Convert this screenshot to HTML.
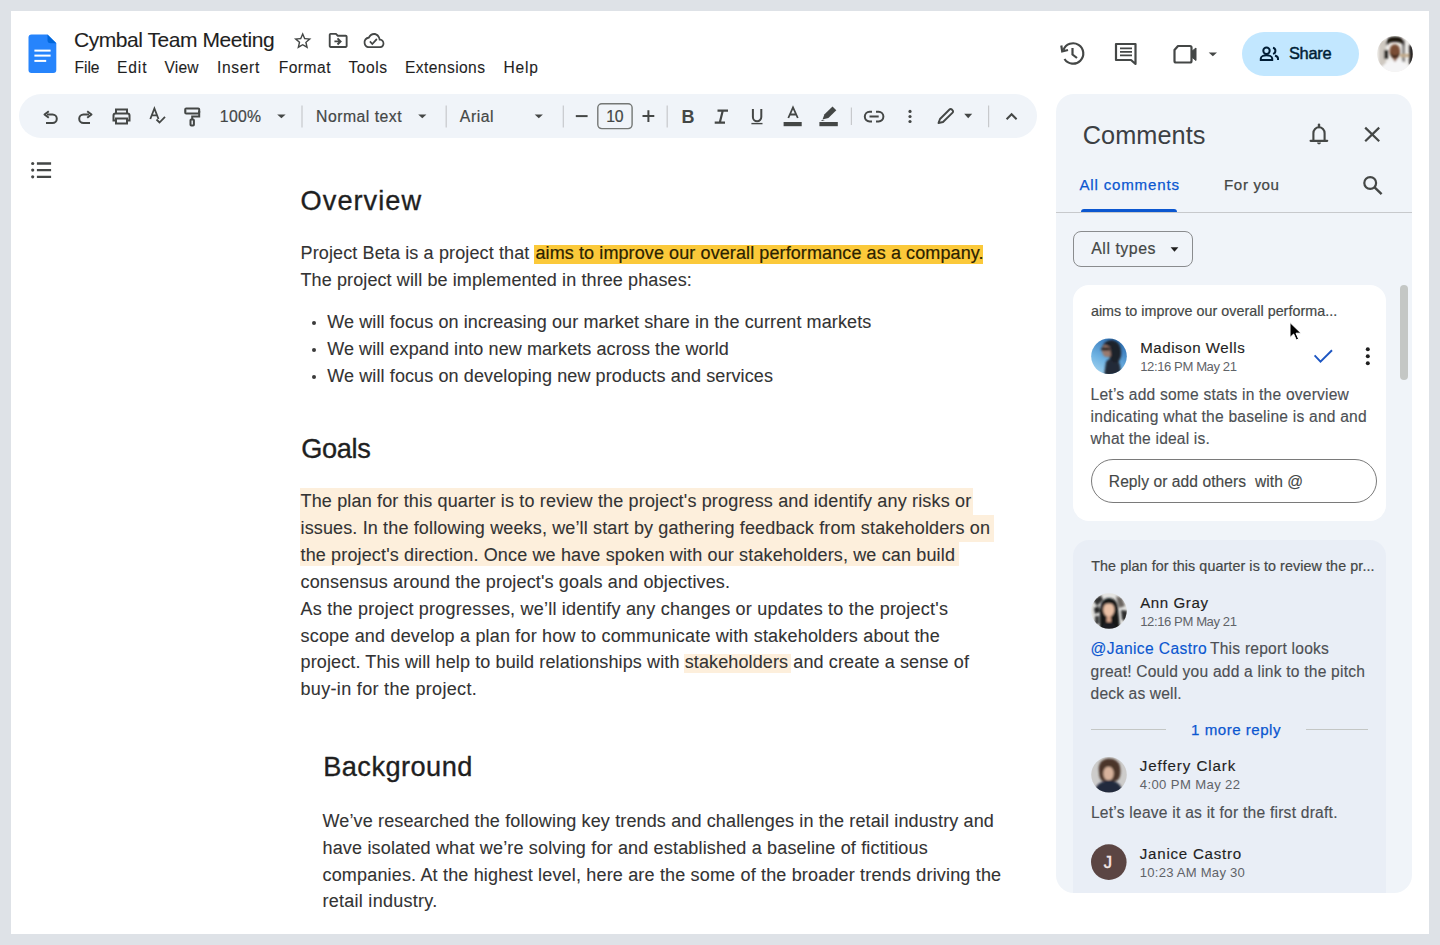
<!DOCTYPE html>
<html><head><meta charset="utf-8"><style>
html,body{margin:0;padding:0;}
body{width:1440px;height:945px;overflow:hidden;background:#dee2e7;position:relative;font-family:"Liberation Sans",sans-serif;}
.t{position:absolute;white-space:pre;line-height:1;}
.a{position:absolute;}
svg{position:absolute;overflow:visible;}
</style></head><body>
<div class=a style="left:11px;top:11px;width:1418px;height:923px;background:#fff"></div>
<!-- docs logo -->
<svg style="left:0;top:0" width="1" height="1">
  <path d="M31.5 34.4 H47.5 L56.3 43.2 V70.1 a3 3 0 0 1 -3 3 H31.5 a3 3 0 0 1 -3 -3 V37.4 a3 3 0 0 1 3 -3 Z" fill="#2684fc"/>
  <path d="M47.5 34.4 L56.3 43.2 H50.5 a3 3 0 0 1 -3 -3 Z" fill="#0066da"/>
  <rect x="34.4" y="49.6" width="16.2" height="2" fill="#fff"/>
  <rect x="34.4" y="54.6" width="16.2" height="2" fill="#fff"/>
  <rect x="34.4" y="59.9" width="11.8" height="2" fill="#fff"/>
</svg>
<!-- title icons -->
<svg style="left:0;top:0" width="1" height="1" fill="#444746">
  <path transform="translate(292.2 30.4) scale(0.875)" fill-rule="evenodd" d="M22 9.24l-7.19-.62L12 2 9.19 8.63 2 9.24l5.46 4.73L5.82 21 12 17.27 18.18 21l-1.63-7.03L22 9.24zM12 15.4l-3.76 2.27 1-4.28-3.32-2.88 4.38-.38L12 6.1l1.71 4.04 4.38.38-3.32 2.88 1 4.28L12 15.4z"/>
  <path transform="translate(326.9 29.2) scale(0.94)" d="M20 6h-8l-2-2H4c-1.1 0-1.99.9-1.99 2L2 18c0 1.1.9 2 2 2h16c1.1 0 2-.9 2-2V8c0-1.1-.9-2-2-2zm0 12H4V6h5.17l2 2H20v10zm-7.84-6H8v2h4.16l-1.59 1.59L11.99 17 16 13.01 11.99 9l-1.41 1.41L12.16 12z"/>
  <path transform="translate(363.7 29.3) scale(0.86 0.94)" d="M19.35 10.04C18.67 6.59 15.640 4 12 4 9.11 4 6.6 5.64 5.35 8.04 2.34 8.36 0 10.91 0 14c0 3.31 2.69 6 6 6h13c2.76 0 5-2.24 5-5 0-2.64-2.05-4.78-4.650-4.96zM19 18H6c-2.21 0-4-1.79-4-4 0-2.05 1.53-3.76 3.56-3.97l1.07-.11.5-.95C8.08 7.14 9.94 6 12 6c2.62 0 4.88 1.86 5.39 4.43l.3 1.5 1.53.11c1.560.1 2.780 1.41 2.78 2.96 0 1.65-1.35 3-3 3zm-9-3.82l-2.09-2.09L6.5 13.5 10 17l6.01-6.01-1.41-1.41z"/>
</svg>
<!-- header right icons -->
<svg style="left:0;top:0" width="1" height="1" fill="none" stroke="#444746" stroke-width="2.2">
  <path d="M1063.5 50 A10.2 10.2 0 1 1 1064.5 59" />
  <path d="M1061.3 45.5 L1062.2 51.5 L1068 50" stroke-linejoin="miter"/>
  <path d="M1072.5 48 V54.5 L1077 58" />
  <path d="M1116 44 H1135.5 V64 L1131 60 H1116 Z" stroke-linejoin="round"/>
  <path d="M1120 48.3 H1132 M1120 51.8 H1132 M1120 55.3 H1132" stroke-width="1.8"/>
  <path d="M1178 46 H1190 a1.5 1.5 0 0 1 1.5 1.5 V61 a1.5 1.5 0 0 1 -1.5 1.5 H1176 a1.5 1.5 0 0 1 -1.5 -1.5 V50 Z" stroke-linejoin="round"/>
  <path d="M1191.5 51.5 L1196 48 V60.5 L1191.5 57 Z" fill="#444746" stroke-width="1"/>
  <path d="M1208.7 52.5 H1217 L1212.85 56.3 Z" fill="#444746" stroke="none"/>
</svg>
<!-- share button -->
<div class=a style="left:1241.8px;top:31.8px;width:117.4px;height:43.8px;border-radius:22px;background:#c2e7ff"></div>
<svg style="left:0;top:0" width="1" height="1" fill="none" stroke="#001d35" stroke-width="2">
  <circle cx="1266.5" cy="50.8" r="3.2"/>
  <path d="M1260.8 60 V58.5 c0 -2 3 -3.2 5.7 -3.2 s5.7 1.2 5.7 3.2 V60 Z" />
  <path d="M1273 47.7 a3.2 3.2 0 0 1 0 6.2" />
  <path d="M1275 55.5 c1.8 0.6 3 1.6 3 3 V60" />
</svg>
<!-- user avatar -->
<svg style="left:0;top:0" width="1" height="1">
  <defs><clipPath id="cpU"><circle cx="1395" cy="53.9" r="17.9"/></clipPath>
  <filter id="blU" x="-20%" y="-20%" width="140%" height="140%"><feGaussianBlur stdDeviation="0.9"/></filter></defs>
  <g clip-path="url(#cpU)">
    <rect x="1376" y="35" width="38" height="38" fill="#eeece9"/>
    <g filter="url(#blU)">
    <rect x="1379" y="40" width="7" height="26" fill="#cfc9c1"/>
    <rect x="1384" y="50" width="4" height="9" fill="#2b2623"/>
    <rect x="1402" y="40" width="3" height="22" fill="#8c8a88"/>
    <rect x="1400" y="54" width="15" height="3" fill="#c2aa8a"/>
    <rect x="1409" y="45" width="5" height="20" fill="#2a2725"/>
    <path d="M1379 75 Q1381 62 1395 59 Q1409 61 1412 75 Z" fill="#f5f5f6"/>
    <path d="M1391.5 57 L1395 62 L1398.5 57 Z" fill="#8d6048"/>
    <ellipse cx="1394.8" cy="51" rx="5.3" ry="6.8" fill="#7a4e35"/>
    <path d="M1386 46 Q1385 36.5 1395 36.5 Q1405 36.5 1404 46 Q1401 41.5 1395 42 Q1389 41.5 1386 46 Z" fill="#1e1510"/>
    <path d="M1390 52.5 Q1395 59 1400 52.5 Q1399.5 57.5 1395 58 Q1390.5 57.5 1390 52.5Z" fill="#2f1e15"/>
    </g>
  </g>
</svg>
<!-- toolbar -->
<div class=a style="left:18.8px;top:93.8px;width:1018px;height:44.5px;border-radius:22.25px;background:#f0f4f9"></div>
<svg style="left:0;top:0" width="1" height="1" fill="none" stroke="#444746" stroke-width="2">
  <!-- undo -->
  <path d="M47 114.5 H52.5 a4.3 4.3 0 0 1 0 8.6 H46" />
  <path d="M48.8 111.2 L44.5 114.5 L48.8 117.8" stroke-linejoin="round"/>
  <!-- redo -->
  <path d="M89 114.5 H83.5 a4.3 4.3 0 0 0 0 8.6 H90" />
  <path d="M87.2 111.2 L91.5 114.5 L87.2 117.8" stroke-linejoin="round"/>
  <!-- print -->
  <path d="M116 113.5 V109.6 H127 V113.5" />
  <path d="M116 120.5 H113.5 V115.5 a2 2 0 0 1 2 -2 H127.5 a2 2 0 0 1 2 2 V120.5 H127" />
  <rect x="116" y="118.5" width="11" height="5" />
  <!-- spellcheck -->
  <path d="M150.3 119 L154.4 108.5 L158.5 119 M151.8 115.4 H157" stroke-width="1.8"/>
  <path d="M156.5 119.5 L159.5 122.5 L165 116.8" stroke-width="1.8"/>
  <!-- paint format -->
  <rect x="185.2" y="108.5" width="14" height="5" rx="1"/>
  <path d="M185.2 111 H186.2 M199.2 111 V116.5 H192.2 V119.5" />
  <rect x="190.5" y="119.5" width="3.4" height="6" rx="0.8"/>
  <!-- arrows -->
  <path d="M277.2 114.4 H285.6 L281.4 118.2 Z" fill="#444746" stroke="none"/>
  <path d="M418.2 114.4 H426.4 L422.3 118.2 Z" fill="#444746" stroke="none"/>
  <path d="M534.7 114.4 H542.9 L538.8 118.2 Z" fill="#444746" stroke="none"/>
  <path d="M964.2 113.8 H972.2 L968.2 118.3 Z" fill="#444746" stroke="none"/>
  <!-- separators -->
  <path d="M302 105.4 V127.6 M446.2 105.4 V127.6 M563.3 105.4 V127.6 M667.2 105.4 V127.6 M851.4 107.5 V124.9 M988.6 105.4 V127.2" stroke="#c7c9cc" stroke-width="1.2"/>
  <!-- minus / plus -->
  <path d="M575.8 116.1 H587.6" />
  <path d="M642.5 116.1 H654.3 M648.4 110.3 V122" />
  <!-- size box -->
  <rect x="597.8" y="103.7" width="34.3" height="24.9" rx="4" stroke="#747775" stroke-width="1.4"/>
  <!-- underline -->
  <path d="M752.9 109 V117 a4.2 4.2 0 0 0 8.4 0 V109" stroke-width="2"/>
  <path d="M751.4 123.6 H762.5" stroke-width="1.4"/>
  <!-- text color A -->
  <path d="M788.3 118 L793 107.5 L797.8 118 M789.9 114.5 H796.2" stroke-width="1.8"/>
  <rect x="783.6" y="122" width="18.1" height="4.2" fill="#444746" stroke="none"/>
  <!-- highlighter -->
  <path d="M822.5 119.5 L824.5 114.2 L832.5 106.5 L836.3 110.3 L828.4 118.1 Z" fill="#444746" stroke="none"/>
  <path d="M822 120 L821.1 121 H825" fill="#444746" stroke="none"/>
  <rect x="819.4" y="122" width="18.4" height="4.2" fill="#444746" stroke="none"/>
  <!-- link -->
  <path d="M872 111.8 H869.6 a4.8 4.8 0 0 0 0 9.6 H872 M876 111.8 H878.6 a4.8 4.8 0 0 1 0 9.6 H876 M869.5 116.6 H878.7" stroke-width="2"/>
  <!-- more -->
  <circle cx="910" cy="111.4" r="1.6" fill="#444746" stroke="none"/>
  <circle cx="910" cy="116.5" r="1.6" fill="#444746" stroke="none"/>
  <circle cx="910" cy="121.5" r="1.6" fill="#444746" stroke="none"/>
  <!-- pencil -->
  <path d="M938.5 123 L940 119 L949.5 109.5 a1.6 1.6 0 0 1 2.3 0 L952.6 110.3 a1.6 1.6 0 0 1 0 2.3 L943 122 Z" stroke-width="1.9" stroke-linejoin="round"/>
  <!-- chevron up -->
  <path d="M1006.6 119.2 L1011.6 114.2 L1016.6 119.2" stroke-width="2"/>
  <!-- list icon -->
  <circle cx="32.7" cy="163.5" r="1.6" fill="#444746" stroke="none"/>
  <circle cx="32.7" cy="170.1" r="1.6" fill="#444746" stroke="none"/>
  <circle cx="32.7" cy="176.8" r="1.6" fill="#444746" stroke="none"/>
  <path d="M36.9 163.5 H51.1 M36.9 170.1 H51.1 M36.9 176.8 H51.1" stroke-width="2.3"/>
</svg>
<!-- B and I glyphs -->
<div class=t style="left:681.5px;top:107.5px;font-size:18px;font-weight:700;color:#444746">B</div>
<svg style="left:0;top:0" width="1" height="1" fill="none" stroke="#444746" stroke-width="2.2">
  <path d="M717.5 110.6 H728 M714.7 122.6 H725 M722.8 110.6 L719.8 122.6" />
</svg>
<!-- doc highlights -->
<div class=a style="left:534.2px;top:245px;width:448.7px;height:18.5px;background:#fbc93a"></div>
<div class=a style="left:299.6px;top:488.2px;width:673.4px;height:27px;background:#fdefdc"></div>
<div class=a style="left:299.6px;top:515.2px;width:694.4px;height:27px;background:#fdefdc"></div>
<div class=a style="left:299.6px;top:542.2px;width:659.4px;height:23.5px;background:#fdefdc"></div>
<div class=a style="left:684.1px;top:653.6px;width:107.4px;height:19px;background:#fdefdc"></div>
<!-- bullets -->
<div class=a style="left:311.7px;top:321.0px;width:4px;height:4px;border-radius:50%;background:#3a3a3a"></div>
<div class=a style="left:311.7px;top:348.0px;width:4px;height:4px;border-radius:50%;background:#3a3a3a"></div>
<div class=a style="left:311.7px;top:375.1px;width:4px;height:4px;border-radius:50%;background:#3a3a3a"></div>
<!-- comments panel -->
<div class=a style="left:1056px;top:94.3px;width:356px;height:799px;border-radius:18px;background:#f0f4f9;overflow:hidden">
  <div class=a style="left:0;top:117.8px;width:356px;height:1.3px;background:#c7c9cc"></div>
  <div class=a style="left:25px;top:114.5px;width:96px;height:3.5px;border-radius:3px 3px 0 0;background:#0b57d0"></div>
  <div class=a style="left:17.1px;top:136.8px;width:118.2px;height:33.6px;border:1.2px solid #8a8c8e;border-radius:8px"></div>
  <div class=a style="left:16.6px;top:190.7px;width:313px;height:236px;border-radius:16px;background:#fff"></div>
  <div class=a style="left:34.7px;top:364.9px;width:284px;height:42.2px;border:1.4px solid #7a7a7a;border-radius:23px"></div>
  <div class=a style="left:343.5px;top:190.7px;width:8.3px;height:95.3px;border-radius:4.2px;background:#c4c7c5"></div>
  <div class=a style="left:17px;top:446.1px;width:312.6px;height:400px;border-radius:16px;background:#e9eef6"></div>
  <div class=a style="left:35px;top:634.6px;width:74.6px;height:1.2px;background:#c4c7c5"></div>
  <div class=a style="left:250.2px;top:634.6px;width:61.6px;height:1.2px;background:#c4c7c5"></div>
</div>
<svg style="left:0;top:0" width="1" height="1" fill="none" stroke="#444746" stroke-width="2.2">
  <!-- bell -->
  <path d="M1313.4 140.8 V133.2 a5.6 6 0 0 1 11.2 0 V140.8" stroke-width="2.1"/>
  <path d="M1310.6 140.8 H1327.2" stroke-width="2.2" stroke-linecap="round"/>
  <path d="M1319 124.6 V127" stroke-width="2.4" stroke-linecap="round"/>
  <path d="M1317 142.6 a2 1.8 0 0 0 4 0 Z" fill="#444746" stroke="none"/>
  <!-- close -->
  <path d="M1365.2 127.6 L1379.2 141.2 M1379.2 127.6 L1365.2 141.2" stroke-width="2.2"/>
  <!-- search -->
  <circle cx="1370.2" cy="183" r="5.9" stroke-width="2.2"/>
  <path d="M1374.6 187.4 L1381.6 194.2" stroke-width="2.4"/>
  <!-- all types arrow -->
  <path d="M1170.6 247.2 H1178.4 L1174.5 251.8 Z" fill="#1f1f1f" stroke="none"/>
  <!-- check -->
  <path d="M1314.6 355.4 L1320.5 361.6 L1332 350.3" stroke="#1d56c2" stroke-width="1.9"/>
  <!-- more vertical -->
  <circle cx="1367.8" cy="349.3" r="2" fill="#1f1f1f" stroke="none"/>
  <circle cx="1367.8" cy="356.2" r="2" fill="#1f1f1f" stroke="none"/>
  <circle cx="1367.8" cy="363.2" r="2" fill="#1f1f1f" stroke="none"/>
</svg>
<!-- avatars -->
<svg style="left:0;top:0" width="1" height="1">
  <defs>
    <clipPath id="cpM"><circle cx="1109" cy="356.3" r="17.8"/></clipPath>
    <clipPath id="cpA"><circle cx="1109" cy="611" r="17.8"/></clipPath>
    <clipPath id="cpJ"><circle cx="1109" cy="774.8" r="17.8"/></clipPath>
    <linearGradient id="sky" x1="0.7" y1="0" x2="0.2" y2="1"><stop offset="0" stop-color="#2a6bb0"/><stop offset="0.6" stop-color="#6fb3e3"/><stop offset="1" stop-color="#a9d6f0"/></linearGradient>
    <filter id="bl" x="-20%" y="-20%" width="140%" height="140%"><feGaussianBlur stdDeviation="0.8"/></filter>
  </defs>
  <g clip-path="url(#cpM)">
    <rect x="1090" y="338" width="38" height="38" fill="url(#sky)"/>
    <g filter="url(#bl)">
    <path d="M1104 376 L1106 362 Q1110 357 1116 358 Q1121 362 1121 376 Z" fill="#242a38"/>
    <path d="M1102 348 Q1104 340 1112 340 Q1120 341 1121 350 Q1122 358 1118 362 Q1112 364 1110 358 Z" fill="#1f222b"/>
    <path d="M1101.5 350 Q1102 345 1106 345 L1110 347 L1111 356 Q1107 358 1104 356 Q1102 353 1101.5 350 Z" fill="#9b7a6e"/>
    <rect x="1101" y="347.5" width="9" height="3" rx="1.5" fill="#1a1a1f"/>
    </g>
  </g>
  <g clip-path="url(#cpA)">
    <rect x="1090" y="593" width="38" height="38" fill="#e4e4e2"/>
    <g filter="url(#bl)">
    <path d="M1093 600 L1101 595 L1103 600 L1097 606 Z" fill="#2f2f2f"/>
    <path d="M1094 608 L1099 606 L1100 612 L1095 614 Z" fill="#222"/>
    <rect x="1095" y="616" width="4" height="8" fill="#3a3a3a"/>
    <path d="M1116 596 L1122 598 L1125 606 L1119 608 Z" fill="#6b6560"/>
    <path d="M1121 610 L1128 611 L1127 621 L1122 620 Z" fill="#2d2d2d"/>
    <path d="M1100 631 Q1099 612 1101 604 Q1104 597.5 1109.5 598 Q1116 598.5 1117.5 605 Q1119 615 1120 631 Z" fill="#121418"/>
    <ellipse cx="1108.8" cy="609.8" rx="5.6" ry="7" fill="#eac0a6"/>
    <path d="M1103 605 Q1105 600.5 1109.5 601 Q1114 601.5 1114.5 605 Q1111 603 1108.5 603.5 Q1105 603.5 1103 605Z" fill="#121418"/>
    <path d="M1106.8 616 L1110.8 616 L1111.5 631 L1106 631 Z" fill="#d6a68c"/>
    <path d="M1101 631 Q1102 624 1106 622 L1111.5 622 Q1116 624 1117 631 Z" fill="#1b1d22"/>
    </g>
  </g>
  <g clip-path="url(#cpJ)">
    <rect x="1090" y="756" width="38" height="38" fill="#cdcccb"/>
    <g filter="url(#bl)">
    <path d="M1099 772 Q1097 760 1108 758.5 Q1120 758 1120.5 770 Q1121 779 1116 781 L1102 781 Q1099 778 1099 772 Z" fill="#4b3629"/>
    <ellipse cx="1108.5" cy="773.5" rx="5.2" ry="7" fill="#d8b29c"/>
    <path d="M1103 769 Q1104 763 1109 764 Q1114 764 1114.5 769 Q1112 766 1108.5 766.5 Q1105 766 1103 769 Z" fill="#4b3629"/>
    <path d="M1094 794 Q1095 782 1108.5 780 Q1122 781 1123 794 Z" fill="#232a3d"/>
    </g>
  </g>
  <circle cx="1108.8" cy="862.1" r="17.8" fill="#5b4543"/>
</svg>
<div class=t style="left:1103.8px;top:853.6px;font-size:16.5px;color:#f3e7e5;-webkit-text-stroke:0.5px #f3e7e5">J</div>
<!-- cursor -->
<svg style="left:0;top:0" width="1" height="1">
  <path d="M1290 322.5 V337.5 L1293.6 334 L1296.3 340 L1298.6 339 L1296 333.2 H1301 Z" fill="#000" stroke="#fff" stroke-width="1"/>
</svg>

<div class=t style="left:73.9px;top:29.3px;font-size:21.0px;color:#1f1f1f;letter-spacing:-0.430px;-webkit-text-stroke:0.1px #1f1f1f">Cymbal Team Meeting</div><div class=t style="left:74.5px;top:59.5px;font-size:15.6px;color:#1f1f1f;letter-spacing:-0.047px;-webkit-text-stroke:0.1px #1f1f1f">File</div><div class=t style="left:117.0px;top:59.5px;font-size:15.6px;color:#1f1f1f;letter-spacing:0.875px;-webkit-text-stroke:0.1px #1f1f1f">Edit</div><div class=t style="left:164.5px;top:59.5px;font-size:15.6px;color:#1f1f1f;letter-spacing:0.156px;-webkit-text-stroke:0.1px #1f1f1f">View</div><div class=t style="left:217.0px;top:59.5px;font-size:15.6px;color:#1f1f1f;letter-spacing:0.650px;-webkit-text-stroke:0.1px #1f1f1f">Insert</div><div class=t style="left:278.7px;top:59.5px;font-size:15.6px;color:#1f1f1f;letter-spacing:0.482px;-webkit-text-stroke:0.1px #1f1f1f">Format</div><div class=t style="left:348.5px;top:59.5px;font-size:15.6px;color:#1f1f1f;letter-spacing:0.523px;-webkit-text-stroke:0.1px #1f1f1f">Tools</div><div class=t style="left:405.0px;top:59.5px;font-size:15.6px;color:#1f1f1f;letter-spacing:0.413px;-webkit-text-stroke:0.1px #1f1f1f">Extensions</div><div class=t style="left:503.5px;top:59.5px;font-size:15.6px;color:#1f1f1f;letter-spacing:0.807px;-webkit-text-stroke:0.1px #1f1f1f">Help</div><div class=t style="left:1288.9px;top:45.3px;font-size:16.4px;color:#001d35;letter-spacing:-0.263px;-webkit-text-stroke:0.45px #001d35">Share</div><div class=t style="left:219.8px;top:108.9px;font-size:15.8px;color:#444746;letter-spacing:0.298px;-webkit-text-stroke:0.2px #444746">100%</div><div class=t style="left:316.1px;top:108.9px;font-size:15.8px;color:#444746;letter-spacing:0.473px;-webkit-text-stroke:0.2px #444746">Normal text</div><div class=t style="left:459.8px;top:108.9px;font-size:15.8px;color:#444746;letter-spacing:0.548px;-webkit-text-stroke:0.2px #444746">Arial</div><div class=t style="left:606.2px;top:108.9px;font-size:15.8px;color:#444746;letter-spacing:-0.278px;-webkit-text-stroke:0.2px #444746">10</div><div class=t style="left:300.6px;top:187.4px;font-size:27.2px;color:#1f1f1f;letter-spacing:1.027px;-webkit-text-stroke:0.35px #1f1f1f">Overview</div><div class=t style="left:300.5px;top:244.0px;font-size:18.0px;color:#333333;letter-spacing:0.129px;-webkit-text-stroke:0.1px #333">Project Beta is a project that </div><div class=t style="left:535.5px;top:244.0px;font-size:18.0px;color:#2b2200;letter-spacing:0.099px;-webkit-text-stroke:0.2px #2b2200">aims to improve our overall performance as a company.</div><div class=t style="left:300.5px;top:271.0px;font-size:18.0px;color:#333333;letter-spacing:0.108px;-webkit-text-stroke:0.1px #333">The project will be implemented in three phases:</div><div class=t style="left:327.2px;top:313.2px;font-size:18.0px;color:#333333;letter-spacing:0.109px;-webkit-text-stroke:0.1px #333">We will focus on increasing our market share in the current markets</div><div class=t style="left:327.2px;top:340.2px;font-size:18.0px;color:#333333;letter-spacing:0.080px;-webkit-text-stroke:0.1px #333">We will expand into new markets across the world</div><div class=t style="left:327.2px;top:367.3px;font-size:18.0px;color:#333333;letter-spacing:0.113px;-webkit-text-stroke:0.1px #333">We will focus on developing new products and services</div><div class=t style="left:301.3px;top:434.7px;font-size:27.2px;color:#1f1f1f;letter-spacing:-0.383px;-webkit-text-stroke:0.35px #1f1f1f">Goals</div><div class=t style="left:300.5px;top:492.2px;font-size:18.0px;color:#333333;letter-spacing:0.162px;-webkit-text-stroke:0.1px #333">The plan for this quarter is to review the project&#x27;s progress and identify any risks or</div><div class=t style="left:300.5px;top:519.1px;font-size:18.0px;color:#333333;letter-spacing:0.142px;-webkit-text-stroke:0.1px #333">issues. In the following weeks, we’ll start by gathering feedback from stakeholders on</div><div class=t style="left:300.5px;top:546.4px;font-size:18.0px;color:#333333;letter-spacing:0.147px;-webkit-text-stroke:0.1px #333">the project&#x27;s direction. Once we have spoken with our stakeholders, we can build</div><div class=t style="left:300.5px;top:573.2px;font-size:18.0px;color:#333333;letter-spacing:0.153px;-webkit-text-stroke:0.1px #333">consensus around the project&#x27;s goals and objectives.</div><div class=t style="left:300.5px;top:600.0px;font-size:18.0px;color:#333333;letter-spacing:0.220px;-webkit-text-stroke:0.1px #333">As the project progresses, we’ll identify any changes or updates to the project&#x27;s</div><div class=t style="left:300.5px;top:626.8px;font-size:18.0px;color:#333333;letter-spacing:0.188px;-webkit-text-stroke:0.1px #333">scope and develop a plan for how to communicate with stakeholders about the</div><div class=t style="left:300.5px;top:653.4px;font-size:18.0px;color:#333333;letter-spacing:0.122px;-webkit-text-stroke:0.1px #333">project. This will help to build relationships with stakeholders and create a sense of</div><div class=t style="left:300.5px;top:680.3px;font-size:18.0px;color:#333333;letter-spacing:0.325px;-webkit-text-stroke:0.1px #333">buy-in for the project.</div><div class=t style="left:323.2px;top:753.4px;font-size:27.2px;color:#1f1f1f;letter-spacing:0.455px;-webkit-text-stroke:0.35px #1f1f1f">Background</div><div class=t style="left:322.5px;top:811.5px;font-size:18.0px;color:#333333;letter-spacing:0.138px;-webkit-text-stroke:0.1px #333">We’ve researched the following key trends and challenges in the retail industry and</div><div class=t style="left:322.5px;top:838.7px;font-size:18.0px;color:#333333;letter-spacing:0.169px;-webkit-text-stroke:0.1px #333">have isolated what we’re solving for and established a baseline of fictitious</div><div class=t style="left:322.5px;top:865.8px;font-size:18.0px;color:#333333;letter-spacing:0.171px;-webkit-text-stroke:0.1px #333">companies. At the highest level, here are the some of the broader trends driving the</div><div class=t style="left:322.5px;top:892.4px;font-size:18.0px;color:#333333;letter-spacing:0.265px;-webkit-text-stroke:0.1px #333">retail industry.</div><div class=t style="left:1082.8px;top:122.8px;font-size:25.3px;color:#3c4043;letter-spacing:0.041px">Comments</div><div class=t style="left:1079.4px;top:177.2px;font-size:15.1px;color:#0b57d0;letter-spacing:0.819px;-webkit-text-stroke:0.25px #0b57d0">All comments</div><div class=t style="left:1224.0px;top:177.2px;font-size:15.1px;color:#444746;letter-spacing:0.638px;-webkit-text-stroke:0.25px #444746">For you</div><div class=t style="left:1091.2px;top:241.4px;font-size:15.9px;color:#444746;letter-spacing:0.530px;-webkit-text-stroke:0.2px #444746">All types</div><div class=t style="left:1090.9px;top:304.3px;font-size:14.3px;color:#444746;letter-spacing:0.041px;-webkit-text-stroke:0.2px #444746">aims to improve our overall performa...</div><div class=t style="left:1140.2px;top:339.7px;font-size:15.1px;color:#1f1f1f;letter-spacing:0.552px;-webkit-text-stroke:0.15px #1f1f1f">Madison Wells</div><div class=t style="left:1140.2px;top:359.5px;font-size:13.1px;color:#5f6368;letter-spacing:-0.416px">12:16 PM May 21</div><div class=t style="left:1090.6px;top:386.8px;font-size:15.6px;color:#4d5054;letter-spacing:0.206px;-webkit-text-stroke:0.15px #4d5054">Let’s add some stats in the overview</div><div class=t style="left:1090.6px;top:409.0px;font-size:15.6px;color:#4d5054;letter-spacing:0.216px;-webkit-text-stroke:0.15px #4d5054">indicating what the baseline is and and</div><div class=t style="left:1090.6px;top:431.2px;font-size:15.6px;color:#4d5054;letter-spacing:0.179px;-webkit-text-stroke:0.15px #4d5054">what the ideal is.</div><div class=t style="left:1108.8px;top:473.9px;font-size:15.6px;color:#444746;letter-spacing:0.067px;-webkit-text-stroke:0.15px #4d5054">Reply or add others  with @</div><div class=t style="left:1091.2px;top:558.9px;font-size:14.3px;color:#444746;letter-spacing:0.093px;-webkit-text-stroke:0.2px #444746">The plan for this quarter is to review the pr...</div><div class=t style="left:1140.2px;top:594.7px;font-size:15.1px;color:#1f1f1f;letter-spacing:0.576px;-webkit-text-stroke:0.15px #1f1f1f">Ann Gray</div><div class=t style="left:1140.2px;top:614.5px;font-size:13.1px;color:#5f6368;letter-spacing:-0.416px">12:16 PM May 21</div><div class=t style="left:1090.5px;top:641.2px;font-size:15.6px;color:#0b57d0;letter-spacing:0.387px;-webkit-text-stroke:0.15px #0b57d0">@Janice Castro</div><div class=t style="left:1205.7px;top:641.2px;font-size:15.6px;color:#4d5054;letter-spacing:0.228px;-webkit-text-stroke:0.15px #4d5054"> This report looks</div><div class=t style="left:1090.6px;top:663.5px;font-size:15.6px;color:#4d5054;letter-spacing:0.209px;-webkit-text-stroke:0.15px #4d5054">great! Could you add a link to the pitch</div><div class=t style="left:1090.6px;top:685.7px;font-size:15.6px;color:#4d5054;letter-spacing:0.143px;-webkit-text-stroke:0.15px #4d5054">deck as well.</div><div class=t style="left:1191.1px;top:721.6px;font-size:15.1px;color:#0b57d0;letter-spacing:0.501px;-webkit-text-stroke:0.25px #0b57d0">1 more reply</div><div class=t style="left:1139.8px;top:758.4px;font-size:15.1px;color:#1f1f1f;letter-spacing:0.921px;-webkit-text-stroke:0.15px #1f1f1f">Jeffery Clark</div><div class=t style="left:1139.8px;top:778.0px;font-size:13.1px;color:#5f6368;letter-spacing:0.374px">4:00 PM May 22</div><div class=t style="left:1090.9px;top:805.1px;font-size:15.6px;color:#4d5054;letter-spacing:0.235px;-webkit-text-stroke:0.15px #4d5054">Let’s leave it as it for the first draft.</div><div class=t style="left:1139.8px;top:846.2px;font-size:15.1px;color:#1f1f1f;letter-spacing:0.752px;-webkit-text-stroke:0.15px #1f1f1f">Janice Castro</div><div class=t style="left:1139.8px;top:865.6px;font-size:13.1px;color:#5f6368;letter-spacing:0.221px">10:23 AM May 30</div>
</body></html>
